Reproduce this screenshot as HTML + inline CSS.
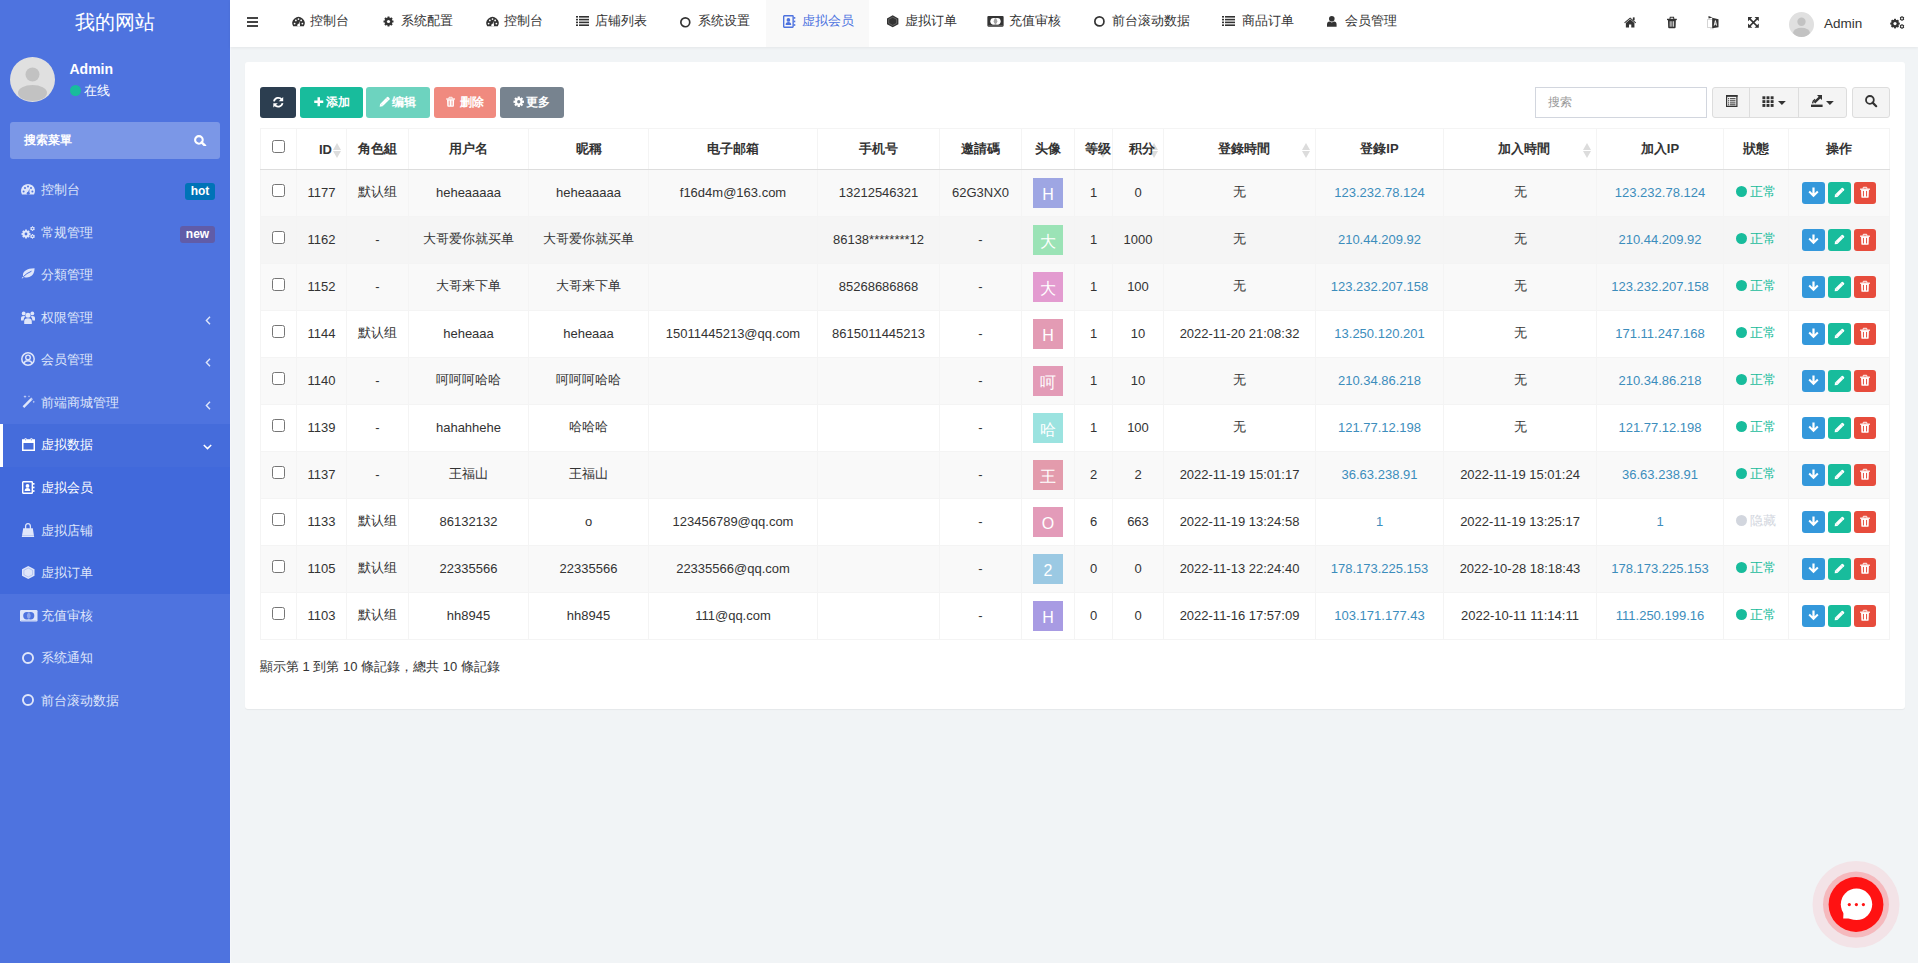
<!DOCTYPE html><html><head><meta charset="utf-8"><style>
*{box-sizing:border-box;margin:0;padding:0}
html,body{width:1918px;height:963px;overflow:hidden}
body{font-family:"Liberation Sans",sans-serif;font-size:13px;color:#333;background:#f1f4f6;position:relative}
.abs{position:absolute}
.sidebar{position:absolute;left:0;top:0;width:230px;height:963px;background:#4e73df}
.logo{position:absolute;left:0;top:0;width:230px;height:47px;text-align:center;color:#fff;font-size:20px;line-height:45px}
.mi{position:absolute;left:0;width:230px;height:42.67px;color:#dfe6fa;font-size:13px;line-height:42.67px}
.mi .t{position:absolute;left:41px;top:0}
.badge{position:absolute;height:17px;line-height:17px;color:#fff;font-weight:bold;font-size:12px;border-radius:3px;text-align:center}
.header{position:absolute;left:230px;top:0;width:1688px;height:47px;background:#fff;box-shadow:0 1px 3px rgba(0,0,0,.06)}
.tab{position:absolute;top:0;height:47px;color:#444;font-size:13px;line-height:43px}
.tab .t{position:absolute;top:0;white-space:nowrap}
.panel{position:absolute;left:245px;top:62px;width:1659.5px;height:647px;background:#fff;border-radius:3px;box-shadow:0 1px 1px rgba(0,0,0,.05)}
.btn{position:absolute;top:87px;height:31px;border-radius:3px;color:#fff;font-size:12px;line-height:30px}
table.tb{position:absolute;left:260px;top:128px;border-collapse:collapse;table-layout:fixed;width:1629px}
.tb td,.tb th{border:1px solid #f4f4f4;text-align:center;vertical-align:middle;white-space:nowrap;overflow:hidden;font-size:13px}
.tb th{height:41px;font-weight:bold;border-bottom:1px solid #ddd;border-top:1px solid #f4f4f4;position:relative}
.tb td{height:47px;padding:0 0 2px 0;position:relative}
.tb tr.odd td{background:#f9f9f9}
.tb tr.hov td{background:#f5f5f5}
.cb{display:inline-block;width:13px;height:13px;border:1px solid #767676;border-radius:2.5px;background:#fff;vertical-align:middle}
.ip{color:#3c8dbc}
.av{display:inline-block;width:30px;height:30px;line-height:34px;color:#fff;font-size:16px;vertical-align:middle;overflow:hidden;position:relative;top:1px}
.st{color:#18bc9c}
.dot{display:inline-block;width:11px;height:11px;border-radius:50%;background:#18bc9c;vertical-align:-1px;margin-right:3px}
.ab{display:inline-block;width:23px;height:22px;border-radius:3px;vertical-align:middle;position:relative;top:1px;margin:0 1.5px}
.sort{position:absolute;top:13px}
</style></head><body>
<div class="sidebar">
<div class="logo">我的网站</div>
<svg class="abs" style="left:10px;top:57px" width="45" height="45" viewBox="0 0 45 45"><defs><clipPath id="cav"><circle cx="22.5" cy="22.5" r="22.5"/></clipPath></defs><circle cx="22.5" cy="22.5" r="22.5" fill="#e0e0e0"/><g clip-path="url(#cav)" fill="#c2c2c2"><circle cx="22.5" cy="17.5" r="7"/><ellipse cx="22.5" cy="36" rx="14.5" ry="8"/></g></svg>
<div class="abs" style="left:69.5px;top:60px;color:#fff;font-weight:bold;font-size:14px;line-height:18px">Admin</div>
<div class="abs" style="left:70px;top:85px;width:11px;height:11px;border-radius:50%;background:#18bc9c"></div>
<div class="abs" style="left:84px;top:82px;color:#fff;font-size:13px;line-height:18px">在线</div>
<div class="abs" style="left:10px;top:122px;width:210px;height:37px;border-radius:3px;background:rgba(255,255,255,.26)"></div>
<div class="abs" style="left:24px;top:131px;color:#fff;font-size:12px;line-height:18px;font-weight:bold">搜索菜單</div>
<svg class="abs" style="left:194px;top:134.5px" width="12.5" height="11.5" viewBox="0 0 12.5 11.5"><circle cx="4.9" cy="4.9" r="3.8" fill="none" stroke="#fff" stroke-width="2.1"/><path d="M7.6 7.4 L11 10.6" stroke="#fff" stroke-width="2.5" stroke-linecap="round"/></svg>
<div class="mi" style="top:168.50px;background:#4e73df;color:#dfe6fa">
<span class="t" style="top:0.50px">控制台</span>
<div class="badge" style="left:185px;top:14.5px;width:30px;background:#0073b7">hot</div>
</div>
<svg style="position:absolute;left:21px;top:184.3px;overflow:visible" width="14" height="11" viewBox="0 0 14 11"><path d="M0.95 10.5 A7 7 0 1 1 13.05 10.5 Z" fill="#dfe6fa"/><circle cx="2.6" cy="7.4" r="1" fill="#4e73df"/><circle cx="4" cy="3.9" r="1" fill="#4e73df"/><circle cx="7" cy="2.4" r="1" fill="#4e73df"/><circle cx="10" cy="3.9" r="1" fill="#4e73df"/><circle cx="11.4" cy="7.4" r="1" fill="#4e73df"/><path d="M6.4 9.6 L8.6 4.4 L8.2 9.9 Z" fill="#4e73df"/><circle cx="7.2" cy="9.3" r="1.5" fill="#4e73df"/></svg>
<div class="mi" style="top:211.07px;background:#4e73df;color:#dfe6fa">
<span class="t" style="top:0.50px">常规管理</span>
<div class="badge" style="left:180px;top:15px;width:35px;background:#605ca8">new</div>
</div>
<svg style="position:absolute;left:21px;top:225.8px;overflow:visible" width="14" height="13" viewBox="0 0 14 13"><circle cx="5" cy="8" r="3.6" fill="#dfe6fa"/><rect x="4.1" y="3.5000000000000004" width="1.8" height="1.7000000000000002" fill="#dfe6fa" transform="rotate(0.0 5 8)"/><rect x="4.1" y="3.5000000000000004" width="1.8" height="1.7000000000000002" fill="#dfe6fa" transform="rotate(45.0 5 8)"/><rect x="4.1" y="3.5000000000000004" width="1.8" height="1.7000000000000002" fill="#dfe6fa" transform="rotate(90.0 5 8)"/><rect x="4.1" y="3.5000000000000004" width="1.8" height="1.7000000000000002" fill="#dfe6fa" transform="rotate(135.0 5 8)"/><rect x="4.1" y="3.5000000000000004" width="1.8" height="1.7000000000000002" fill="#dfe6fa" transform="rotate(180.0 5 8)"/><rect x="4.1" y="3.5000000000000004" width="1.8" height="1.7000000000000002" fill="#dfe6fa" transform="rotate(225.0 5 8)"/><rect x="4.1" y="3.5000000000000004" width="1.8" height="1.7000000000000002" fill="#dfe6fa" transform="rotate(270.0 5 8)"/><rect x="4.1" y="3.5000000000000004" width="1.8" height="1.7000000000000002" fill="#dfe6fa" transform="rotate(315.0 5 8)"/><circle cx="5" cy="8" r="1.4" fill="#4e73df"/><circle cx="11.5" cy="2.6" r="1.9" fill="#dfe6fa"/><rect x="10.95" y="0.30000000000000016" width="1.1" height="1.2000000000000002" fill="#dfe6fa" transform="rotate(0.0 11.5 2.6)"/><rect x="10.95" y="0.30000000000000016" width="1.1" height="1.2000000000000002" fill="#dfe6fa" transform="rotate(60.0 11.5 2.6)"/><rect x="10.95" y="0.30000000000000016" width="1.1" height="1.2000000000000002" fill="#dfe6fa" transform="rotate(120.0 11.5 2.6)"/><rect x="10.95" y="0.30000000000000016" width="1.1" height="1.2000000000000002" fill="#dfe6fa" transform="rotate(180.0 11.5 2.6)"/><rect x="10.95" y="0.30000000000000016" width="1.1" height="1.2000000000000002" fill="#dfe6fa" transform="rotate(240.0 11.5 2.6)"/><rect x="10.95" y="0.30000000000000016" width="1.1" height="1.2000000000000002" fill="#dfe6fa" transform="rotate(300.0 11.5 2.6)"/><circle cx="11.5" cy="2.6" r=".8" fill="#4e73df"/><circle cx="11.5" cy="10.3" r="1.9" fill="#dfe6fa"/><rect x="10.95" y="8.0" width="1.1" height="1.2000000000000002" fill="#dfe6fa" transform="rotate(0.0 11.5 10.3)"/><rect x="10.95" y="8.0" width="1.1" height="1.2000000000000002" fill="#dfe6fa" transform="rotate(60.0 11.5 10.3)"/><rect x="10.95" y="8.0" width="1.1" height="1.2000000000000002" fill="#dfe6fa" transform="rotate(120.0 11.5 10.3)"/><rect x="10.95" y="8.0" width="1.1" height="1.2000000000000002" fill="#dfe6fa" transform="rotate(180.0 11.5 10.3)"/><rect x="10.95" y="8.0" width="1.1" height="1.2000000000000002" fill="#dfe6fa" transform="rotate(240.0 11.5 10.3)"/><rect x="10.95" y="8.0" width="1.1" height="1.2000000000000002" fill="#dfe6fa" transform="rotate(300.0 11.5 10.3)"/><circle cx="11.5" cy="10.3" r=".8" fill="#4e73df"/></svg>
<div class="mi" style="top:253.64px;background:#4e73df;color:#dfe6fa">
<span class="t" style="top:0.50px">分類管理</span>
</div>
<svg style="position:absolute;left:21.2px;top:268.4px;overflow:visible" width="14" height="10.5" viewBox="0 0 14 10.5"><path d="M0.6 10.3 Q1.4 9.2 2.2 8.6 Q1 4.8 4.6 2.4 Q7.6 0.4 13.6 0.3 Q13.4 5.6 10.6 7.8 Q7.2 10.3 2.9 8.9 Q1.9 9.7 1.3 10.5 Z" fill="#dfe6fa"/><path d="M2.2 8.8 Q5.5 5.2 10.5 3.2" stroke="#4e73df" stroke-width="1" fill="none"/></svg>
<div class="mi" style="top:296.21px;background:#4e73df;color:#dfe6fa">
<span class="t" style="top:0.50px">权限管理</span>
</div>
<svg style="position:absolute;left:21px;top:311px;overflow:visible" width="14" height="13" viewBox="0 0 14 13"><circle cx="7" cy="4.3" r="2.5" fill="#dfe6fa"/><circle cx="2.7" cy="2.4" r="1.9" fill="#dfe6fa"/><circle cx="11.3" cy="2.4" r="1.9" fill="#dfe6fa"/><path d="M3.2 13 L3.2 10.4 Q3.2 7.3 7 7.3 Q10.8 7.3 10.8 10.4 L10.8 13 Z" fill="#dfe6fa"/><path d="M0 9.6 L0 7.2 Q0 5 2.7 5 Q3.9 5 4.5 5.6 Q2.6 6.6 2.5 9.6 Z" fill="#dfe6fa"/><path d="M14 9.6 L14 7.2 Q14 5 11.3 5 Q10.1 5 9.5 5.6 Q11.4 6.6 11.5 9.6 Z" fill="#dfe6fa"/></svg>
<svg style="position:absolute;left:205px;top:315.5px;overflow:visible" width="6" height="9" viewBox="0 0 6 9"><path d="M5 0.8 L1.4 4.5 L5 8.2" fill="none" stroke="#dfe6fa" stroke-width="1.4"/></svg>
<div class="mi" style="top:338.79px;background:#4e73df;color:#dfe6fa">
<span class="t" style="top:0.50px">会员管理</span>
</div>
<svg style="position:absolute;left:21px;top:352.3px;overflow:visible" width="14" height="14" viewBox="0 0 14 14"><circle cx="7" cy="7" r="6.2" fill="none" stroke="#dfe6fa" stroke-width="1.5"/><circle cx="7" cy="5.4" r="2.3" fill="none" stroke="#dfe6fa" stroke-width="1.4"/><path d="M2.9 11.6 Q3.6 8.7 7 8.7 Q10.4 8.7 11.1 11.6" fill="none" stroke="#dfe6fa" stroke-width="1.4"/></svg>
<svg style="position:absolute;left:205px;top:358.3px;overflow:visible" width="6" height="9" viewBox="0 0 6 9"><path d="M5 0.8 L1.4 4.5 L5 8.2" fill="none" stroke="#dfe6fa" stroke-width="1.4"/></svg>
<div class="mi" style="top:381.36px;height:42.64px;background:#4e73df;color:#dfe6fa">
<span class="t" style="top:0.50px">前端商城管理</span>
</div>
<svg style="position:absolute;left:21.8px;top:395.3px;overflow:visible" width="13" height="12.5" viewBox="0 0 13 12.5"><path d="M0.6 11.2 L9.2 2.6 L10.9 4.3 L2.3 12.9 Z" fill="#dfe6fa"/><path d="M8.6 3.2 L10.3 4.9" stroke="#4e73df" stroke-width=".5"/><path d="M3 0 L3.4 1.3 L4.7 1.7 L3.4 2.1 L3 3.4 L2.6 2.1 L1.3 1.7 L2.6 1.3 Z" fill="#dfe6fa"/><path d="M7 0.2 L7.3 1 L8.1 1.3 L7.3 1.6 L7 2.4 L6.7 1.6 L5.9 1.3 L6.7 1 Z" fill="#dfe6fa"/><path d="M11.8 5.6 L12.1 6.6 L13 6.9 L12.1 7.2 L11.8 8.2 L11.5 7.2 L10.6 6.9 L11.5 6.6 Z" fill="#dfe6fa"/></svg>
<svg style="position:absolute;left:205px;top:400.5px;overflow:visible" width="6" height="9" viewBox="0 0 6 9"><path d="M5 0.8 L1.4 4.5 L5 8.2" fill="none" stroke="#dfe6fa" stroke-width="1.4"/></svg>
<div class="mi" style="top:424px;height:42.67px;background:#456cdb;color:#fff">
<div class="abs" style="left:0;top:0;width:3px;height:42.67px;background:#fff"></div>
<span class="t" style="top:0.43px">虚拟数据</span>
</div>
<svg style="position:absolute;left:21.8px;top:437.6px;overflow:visible" width="13" height="13" viewBox="0 0 13 13"><rect x="0.75" y="2.2" width="11.5" height="10.05" fill="none" stroke="#fff" stroke-width="1.5"/><rect x="0" y="1.5" width="13" height="3.5" fill="#fff"/><rect x="2.6" y="0" width="2" height="3.2" rx=".9" fill="#fff"/><rect x="8.4" y="0" width="2" height="3.2" rx=".9" fill="#fff"/><rect x="3.1" y=".6" width="1" height="1.8" fill="#456cdb" opacity=".6"/><rect x="8.9" y=".6" width="1" height="1.8" fill="#456cdb" opacity=".6"/></svg>
<svg style="position:absolute;left:203.3px;top:444px;overflow:visible" width="9" height="6" viewBox="0 0 9 6"><path d="M0.8 1 L4.5 4.6 L8.2 1" fill="none" stroke="#fff" stroke-width="1.5"/></svg>
<div class="mi" style="top:466.67px;height:42.40px;background:#4169db;color:#fff">
<span class="t" style="top:0.33px">虚拟会员</span>
</div>
<svg style="position:absolute;left:22px;top:481px;overflow:visible" width="12.5" height="13" viewBox="0 0 12.5 13"><rect x="0.7" y="0.7" width="9.6" height="11.6" rx=".6" fill="none" stroke="#fff" stroke-width="1.4"/><circle cx="5.5" cy="4.9" r="1.9" fill="#fff"/><path d="M2.6 10 Q2.8 7.1 5.5 7.1 Q8.2 7.1 8.4 10 Z" fill="#fff"/><rect x="10.8" y="2" width="1.7" height="1.7" fill="#fff"/><rect x="10.8" y="5.6" width="1.7" height="1.7" fill="#fff"/><rect x="10.8" y="9.2" width="1.7" height="1.7" fill="#fff"/></svg>
<div class="mi" style="top:509.07px;background:#4169db;color:#dfe6fa">
<span class="t" style="top:0.50px">虚拟店铺</span>
</div>
<svg style="position:absolute;left:21.4px;top:523.3px;overflow:visible" width="14" height="14" viewBox="0 0 14 14"><path d="M2.2 5.2 L11.8 5.2 L13.2 14 L0.8 14 Z" fill="#dfe6fa"/><rect x="0.8" y="12.3" width="12.4" height=".6" fill="#4169db" opacity=".35"/><path d="M4.6 6.5 L4.6 3.6 Q4.6 0.7 7 0.7 Q9.4 0.7 9.4 3.6 L9.4 6.5" fill="none" stroke="#dfe6fa" stroke-width="1.3"/></svg>
<div class="mi" style="top:551.64px;background:#4169db;color:#dfe6fa">
<span class="t" style="top:0.50px">虚拟订单</span>
</div>
<svg style="position:absolute;left:22px;top:565.9px;overflow:visible" width="12.5" height="13" viewBox="0 0 12.5 13"><path d="M6.25 0 L12.5 3.3 L12.5 9.7 L6.25 13 L0 9.7 L0 3.3 Z" fill="#dfe6fa"/><path d="M6.25 2 L10.6 4.3 L10.6 8.7 L6.25 11 L1.9 8.7 L1.9 4.3 Z" fill="none" stroke="#4169db" stroke-width=".5" opacity=".5"/></svg>
<div class="mi" style="top:594.21px;background:#4e73df;color:#dfe6fa">
<span class="t" style="top:0.50px">充值审核</span>
</div>
<svg style="position:absolute;left:19.8px;top:609.6px;overflow:visible" width="17.5" height="11.5" viewBox="0 0 17.5 11.5"><rect x="0" y="0" width="17.5" height="11.5" rx="1.2" fill="#dfe6fa"/><circle cx="6.9" cy="5.75" r="3.7" fill="#4e73df"/><circle cx="10.6" cy="5.75" r="3.7" fill="#4e73df"/><path d="M8.75 2.5 A3.7 3.7 0 0 1 8.75 9 A3.7 3.7 0 0 1 8.75 2.5 Z" fill="#dfe6fa" opacity=".45"/><rect x="1" y="10" width="15.5" height=".5" fill="#4e73df" opacity=".4"/></svg>
<div class="mi" style="top:636.79px;background:#4e73df;color:#dfe6fa">
<span class="t" style="top:0.50px">系统通知</span>
</div>
<svg style="position:absolute;left:22px;top:651.9px;overflow:visible" width="12" height="12" viewBox="0 0 12 12"><circle cx="6" cy="6" r="5.05" fill="none" stroke="#dfe6fa" stroke-width="1.9"/></svg>
<div class="mi" style="top:679.36px;background:#4e73df;color:#dfe6fa">
<span class="t" style="top:0.50px">前台滚动数据</span>
</div>
<svg style="position:absolute;left:22px;top:694.3px;overflow:visible" width="12" height="12" viewBox="0 0 12 12"><circle cx="6" cy="6" r="5.05" fill="none" stroke="#dfe6fa" stroke-width="1.9"/></svg>
</div>
<div class="abs" style="left:230px;top:0;width:1px;height:963px;background:#f5f7fb"></div>
<div class="header">
<div class="abs" style="left:17px;top:17px;width:11px;height:2px;background:#444"></div>
<div class="abs" style="left:17px;top:21px;width:11px;height:2px;background:#444"></div>
<div class="abs" style="left:17px;top:25px;width:11px;height:2px;background:#444"></div>
<svg style="position:absolute;left:61.89999999999998px;top:17.2px;overflow:visible" width="13" height="9.7" viewBox="0 0 14 11"><path d="M0.95 10.5 A7 7 0 1 1 13.05 10.5 Z" fill="#333"/><circle cx="2.6" cy="7.4" r="1" fill="#fff"/><circle cx="4" cy="3.9" r="1" fill="#fff"/><circle cx="7" cy="2.4" r="1" fill="#fff"/><circle cx="10" cy="3.9" r="1" fill="#fff"/><circle cx="11.4" cy="7.4" r="1" fill="#fff"/><path d="M6.4 9.6 L8.6 4.4 L8.2 9.9 Z" fill="#fff"/><circle cx="7.2" cy="9.3" r="1.5" fill="#fff"/></svg>
<span class="abs" style="left:80.00px;top:12px;line-height:18px;white-space:nowrap;color:#333">控制台</span>
<svg style="position:absolute;left:153px;top:15.7px;overflow:visible" width="11" height="11" viewBox="0 0 11 11"><circle cx="5.5" cy="5.5" r="3.9" fill="#333"/><rect x="4.55" y="0.5000000000000001" width="1.9" height="1.9" fill="#333" transform="rotate(0.0 5.5 5.5)"/><rect x="4.55" y="0.5000000000000001" width="1.9" height="1.9" fill="#333" transform="rotate(45.0 5.5 5.5)"/><rect x="4.55" y="0.5000000000000001" width="1.9" height="1.9" fill="#333" transform="rotate(90.0 5.5 5.5)"/><rect x="4.55" y="0.5000000000000001" width="1.9" height="1.9" fill="#333" transform="rotate(135.0 5.5 5.5)"/><rect x="4.55" y="0.5000000000000001" width="1.9" height="1.9" fill="#333" transform="rotate(180.0 5.5 5.5)"/><rect x="4.55" y="0.5000000000000001" width="1.9" height="1.9" fill="#333" transform="rotate(225.0 5.5 5.5)"/><rect x="4.55" y="0.5000000000000001" width="1.9" height="1.9" fill="#333" transform="rotate(270.0 5.5 5.5)"/><rect x="4.55" y="0.5000000000000001" width="1.9" height="1.9" fill="#333" transform="rotate(315.0 5.5 5.5)"/><circle cx="5.5" cy="5.5" r="1.6" fill="#fff"/></svg>
<span class="abs" style="left:170.50px;top:12px;line-height:18px;white-space:nowrap;color:#333">系统配置</span>
<svg style="position:absolute;left:255.60000000000002px;top:17px;overflow:visible" width="13" height="9.7" viewBox="0 0 14 11"><path d="M0.95 10.5 A7 7 0 1 1 13.05 10.5 Z" fill="#333"/><circle cx="2.6" cy="7.4" r="1" fill="#fff"/><circle cx="4" cy="3.9" r="1" fill="#fff"/><circle cx="7" cy="2.4" r="1" fill="#fff"/><circle cx="10" cy="3.9" r="1" fill="#fff"/><circle cx="11.4" cy="7.4" r="1" fill="#fff"/><path d="M6.4 9.6 L8.6 4.4 L8.2 9.9 Z" fill="#fff"/><circle cx="7.2" cy="9.3" r="1.5" fill="#fff"/></svg>
<span class="abs" style="left:274.00px;top:12px;line-height:18px;white-space:nowrap;color:#333">控制台</span>
<svg style="position:absolute;left:346px;top:15.75px;overflow:visible" width="13" height="10" viewBox="0 0 13 10"><rect x="0" y="0" width="2" height="1.6" fill="#333"/><rect x="3" y="0" width="10" height="1.6" fill="#333"/><rect x="0" y="2.8" width="2" height="1.6" fill="#333"/><rect x="3" y="2.8" width="10" height="1.6" fill="#333"/><rect x="0" y="5.6" width="2" height="1.6" fill="#333"/><rect x="3" y="5.6" width="10" height="1.6" fill="#333"/><rect x="0" y="8.4" width="2" height="1.6" fill="#333"/><rect x="3" y="8.4" width="10" height="1.6" fill="#333"/></svg>
<span class="abs" style="left:364.50px;top:12px;line-height:18px;white-space:nowrap;color:#333">店铺列表</span>
<svg style="position:absolute;left:450px;top:16.5px;overflow:visible" width="10.6" height="10.6" viewBox="0 0 12 12"><circle cx="6" cy="6" r="5.05" fill="none" stroke="#333" stroke-width="1.9"/></svg>
<span class="abs" style="left:468.00px;top:12px;line-height:18px;white-space:nowrap;color:#333">系统设置</span>
<div class="abs" style="left:536px;top:0;width:103px;height:47px;background:#f9f9f9"></div>
<svg style="position:absolute;left:552.8px;top:14.7px;overflow:visible" width="12.3" height="13" viewBox="0 0 12.5 13"><rect x="0.7" y="0.7" width="9.6" height="11.6" rx=".6" fill="none" stroke="#4e73df" stroke-width="1.4"/><circle cx="5.5" cy="4.9" r="1.9" fill="#4e73df"/><path d="M2.6 10 Q2.8 7.1 5.5 7.1 Q8.2 7.1 8.4 10 Z" fill="#4e73df"/><rect x="10.8" y="2" width="1.7" height="1.7" fill="#4e73df"/><rect x="10.8" y="5.6" width="1.7" height="1.7" fill="#4e73df"/><rect x="10.8" y="9.2" width="1.7" height="1.7" fill="#4e73df"/></svg>
<span class="abs" style="left:571.50px;top:12px;line-height:18px;white-space:nowrap;color:#4e73df">虚拟会员</span>
<svg style="position:absolute;left:656.5px;top:15.2px;overflow:visible" width="11.4" height="12.6" viewBox="0 0 12.5 13"><path d="M6.25 0 L12.5 3.3 L12.5 9.7 L6.25 13 L0 9.7 L0 3.3 Z" fill="#333"/><path d="M6.25 2 L10.6 4.3 L10.6 8.7 L6.25 11 L1.9 8.7 L1.9 4.3 Z" fill="none" stroke="#fff" stroke-width=".5" opacity=".5"/></svg>
<span class="abs" style="left:675.00px;top:12px;line-height:18px;white-space:nowrap;color:#333">虚拟订单</span>
<svg style="position:absolute;left:757.1px;top:16.1px;overflow:visible" width="17" height="10.7" viewBox="0 0 17.5 11.5"><rect x="0" y="0" width="17.5" height="11.5" rx="1.2" fill="#333"/><circle cx="6.9" cy="5.75" r="3.7" fill="#fff"/><circle cx="10.6" cy="5.75" r="3.7" fill="#fff"/><path d="M8.75 2.5 A3.7 3.7 0 0 1 8.75 9 A3.7 3.7 0 0 1 8.75 2.5 Z" fill="#333" opacity=".45"/><rect x="1" y="10" width="15.5" height=".5" fill="#fff" opacity=".4"/></svg>
<span class="abs" style="left:778.50px;top:12px;line-height:18px;white-space:nowrap;color:#333">充值审核</span>
<svg style="position:absolute;left:863.7px;top:16.4px;overflow:visible" width="10.8" height="10.8" viewBox="0 0 12 12"><circle cx="6" cy="6" r="5.05" fill="none" stroke="#333" stroke-width="1.9"/></svg>
<span class="abs" style="left:882.00px;top:12px;line-height:18px;white-space:nowrap;color:#333">前台滚动数据</span>
<svg style="position:absolute;left:992.3px;top:15.9px;overflow:visible" width="13" height="10" viewBox="0 0 13 10"><rect x="0" y="0" width="2" height="1.6" fill="#333"/><rect x="3" y="0" width="10" height="1.6" fill="#333"/><rect x="0" y="2.8" width="2" height="1.6" fill="#333"/><rect x="3" y="2.8" width="10" height="1.6" fill="#333"/><rect x="0" y="5.6" width="2" height="1.6" fill="#333"/><rect x="3" y="5.6" width="10" height="1.6" fill="#333"/><rect x="0" y="8.4" width="2" height="1.6" fill="#333"/><rect x="3" y="8.4" width="10" height="1.6" fill="#333"/></svg>
<span class="abs" style="left:1011.50px;top:12px;line-height:18px;white-space:nowrap;color:#333">商品订单</span>
<svg style="position:absolute;left:1097px;top:16.2px;overflow:visible" width="9.6" height="10.8" viewBox="0 0 9.6 10.8"><circle cx="4.8" cy="2.8" r="2.8" fill="#333"/><path d="M0 10.8 L0 8.6 Q0 5.8 2.6 5.6 Q3.6 6.4 4.8 6.4 Q6 6.4 7 5.6 Q9.6 5.8 9.6 8.6 L9.6 10.8 Z" fill="#333"/></svg>
<span class="abs" style="left:1115.00px;top:12px;line-height:18px;white-space:nowrap;color:#333">会员管理</span>
<svg style="position:absolute;left:1394px;top:16.6px;overflow:visible" width="12.3" height="10.5" viewBox="0 0 12.5 10.5"><path d="M0.2 5.6 L6.25 0.3 L12.3 5.6 L11.6 6.3 L6.25 1.6 L0.9 6.3 Z" fill="#333"/><rect x="9" y="0.3" width="1.8" height="3" fill="#333"/><path d="M1.9 6 L6.25 2.2 L10.6 6 L10.6 10.5 L7.4 10.5 L7.4 7.5 L5.1 7.5 L5.1 10.5 L1.9 10.5 Z" fill="#333"/></svg>
<svg style="position:absolute;left:1437px;top:16.7px;overflow:visible" width="9.8" height="11.3" viewBox="0 0 10 11.5"><rect x="0" y="1.8" width="10" height="1.4" fill="#333"/><path d="M3 2 L3.3 0.3 L6.7 0.3 L7 2" fill="none" stroke="#333" stroke-width="1.1"/><path d="M1 3 L9 3 L8.8 10.5 Q8.7 11.5 7.8 11.5 L2.2 11.5 Q1.3 11.5 1.2 10.5 Z" fill="#333"/><rect x="2.8" y="4.3" width="0.9" height="5.6" fill="#fff" opacity=".9"/><rect x="4.55" y="4.3" width="0.9" height="5.6" fill="#fff" opacity=".9"/><rect x="6.3" y="4.3" width="0.9" height="5.6" fill="#fff" opacity=".9"/></svg>
<svg style="position:absolute;left:1476.5px;top:15.8px;overflow:visible" width="12" height="13" viewBox="0 0 12 13"><path d="M0.5 3.5 L5.5 3.5 L5.5 11.5 L0.5 11.5 Z" fill="none" stroke="#333" stroke-width=".6" opacity=".35"/><path d="M1.5 0 L5.5 1.6 L1.5 2.4 Z" fill="#333"/><path d="M5.2 1.8 L11.5 3.2 L11.5 11.2 L5.2 12.2 Z" fill="#333"/><path d="M7.2 9.6 L8.4 4.6 L9.6 9.6 M7.7 8 L9.1 8" stroke="#fff" stroke-width=".9" fill="none"/><path d="M3 12.8 L7 12.8" stroke="#333" stroke-width=".5" opacity=".35"/></svg>
<svg style="position:absolute;left:1518px;top:17px;overflow:visible" width="10.8" height="10.8" viewBox="0 0 11 11"><path d="M0 0 L4.4 0 L0 4.4 Z M11 0 L6.6 0 L11 4.4 Z M0 11 L4.4 11 L0 6.6 Z M11 11 L6.6 11 L11 6.6 Z" fill="#333"/><path d="M1.6 1.6 L9.4 9.4 M9.4 1.6 L1.6 9.4" stroke="#333" stroke-width="1.7"/></svg>
<svg class="abs" style="left:1559px;top:12px" width="25" height="25" viewBox="0 0 45 45"><defs><clipPath id="cav2"><circle cx="22.5" cy="22.5" r="22.5"/></clipPath></defs><circle cx="22.5" cy="22.5" r="22.5" fill="#e0e0e0"/><g clip-path="url(#cav2)" fill="#c2c2c2"><circle cx="22.5" cy="17.5" r="7.5"/><ellipse cx="22.5" cy="37" rx="15" ry="8.5"/></g></svg>
<div class="abs" style="left:1594px;top:14.5px;font-size:13.5px;line-height:18px;color:#333">Admin</div>
<svg style="position:absolute;left:1660.3px;top:15.8px;overflow:visible" width="14.5" height="13" viewBox="0 0 14.5 13"><circle cx="5" cy="7.6" r="3.9" fill="#333"/><rect x="4.05" y="2.7999999999999994" width="1.9" height="1.7000000000000002" fill="#333" transform="rotate(0.0 5 7.6)"/><rect x="4.05" y="2.7999999999999994" width="1.9" height="1.7000000000000002" fill="#333" transform="rotate(45.0 5 7.6)"/><rect x="4.05" y="2.7999999999999994" width="1.9" height="1.7000000000000002" fill="#333" transform="rotate(90.0 5 7.6)"/><rect x="4.05" y="2.7999999999999994" width="1.9" height="1.7000000000000002" fill="#333" transform="rotate(135.0 5 7.6)"/><rect x="4.05" y="2.7999999999999994" width="1.9" height="1.7000000000000002" fill="#333" transform="rotate(180.0 5 7.6)"/><rect x="4.05" y="2.7999999999999994" width="1.9" height="1.7000000000000002" fill="#333" transform="rotate(225.0 5 7.6)"/><rect x="4.05" y="2.7999999999999994" width="1.9" height="1.7000000000000002" fill="#333" transform="rotate(270.0 5 7.6)"/><rect x="4.05" y="2.7999999999999994" width="1.9" height="1.7000000000000002" fill="#333" transform="rotate(315.0 5 7.6)"/><circle cx="5" cy="7.6" r="1.6" fill="#fff"/><circle cx="12" cy="2.5" r="1.9" fill="#333"/><rect x="11.45" y="0.20000000000000007" width="1.1" height="1.2000000000000002" fill="#333" transform="rotate(0.0 12 2.5)"/><rect x="11.45" y="0.20000000000000007" width="1.1" height="1.2000000000000002" fill="#333" transform="rotate(60.0 12 2.5)"/><rect x="11.45" y="0.20000000000000007" width="1.1" height="1.2000000000000002" fill="#333" transform="rotate(120.0 12 2.5)"/><rect x="11.45" y="0.20000000000000007" width="1.1" height="1.2000000000000002" fill="#333" transform="rotate(180.0 12 2.5)"/><rect x="11.45" y="0.20000000000000007" width="1.1" height="1.2000000000000002" fill="#333" transform="rotate(240.0 12 2.5)"/><rect x="11.45" y="0.20000000000000007" width="1.1" height="1.2000000000000002" fill="#333" transform="rotate(300.0 12 2.5)"/><circle cx="12" cy="2.5" r=".9" fill="#fff"/><circle cx="12" cy="10.5" r="1.9" fill="#333"/><rect x="11.45" y="8.2" width="1.1" height="1.2000000000000002" fill="#333" transform="rotate(0.0 12 10.5)"/><rect x="11.45" y="8.2" width="1.1" height="1.2000000000000002" fill="#333" transform="rotate(60.0 12 10.5)"/><rect x="11.45" y="8.2" width="1.1" height="1.2000000000000002" fill="#333" transform="rotate(120.0 12 10.5)"/><rect x="11.45" y="8.2" width="1.1" height="1.2000000000000002" fill="#333" transform="rotate(180.0 12 10.5)"/><rect x="11.45" y="8.2" width="1.1" height="1.2000000000000002" fill="#333" transform="rotate(240.0 12 10.5)"/><rect x="11.45" y="8.2" width="1.1" height="1.2000000000000002" fill="#333" transform="rotate(300.0 12 10.5)"/><circle cx="12" cy="10.5" r=".9" fill="#fff"/></svg>
</div>
<div class="panel"></div>
<div class="btn" style="left:260px;width:36px;background:#2c3e50">
<svg style="position:absolute;left:12px;top:9px" width="12.5" height="12.5" viewBox="0 0 14 14" preserveAspectRatio="none"><path d="M2.2 6 A5 5 0 0 1 11 4" fill="none" stroke="#fff" stroke-width="2"/><path d="M12.5 1 L12.5 6 L7.5 6 Z" fill="#fff"/><path d="M11.8 8 A5 5 0 0 1 3 10" fill="none" stroke="#fff" stroke-width="2"/><path d="M1.5 13 L1.5 8 L6.5 8 Z" fill="#fff"/></svg>
</div>
<div class="btn" style="left:300px;width:62.7px;background:#18bc9c">
<svg style="position:absolute;left:12.5px;top:9px" width="11.5" height="11.5" viewBox="0 0 14 14" preserveAspectRatio="none"><path d="M5.5 1.5 L8.5 1.5 L8.5 5.5 L12.5 5.5 L12.5 8.5 L8.5 8.5 L8.5 12.5 L5.5 12.5 L5.5 8.5 L1.5 8.5 L1.5 5.5 L5.5 5.5 Z" fill="#fff"/></svg>
<span class="abs" style="left:26px;top:5.5px;line-height:18px;font-size:12px;font-weight:bold">添加</span>
</div>
<div class="btn" style="left:366px;width:64px;background:#6dd3bf">
<svg style="position:absolute;left:12.5px;top:9px" width="11.5" height="11.5" viewBox="0 0 14 14" preserveAspectRatio="none"><path d="M0.8 13.2 L1.4 9.6 L9.8 1.2 Q10.6 0.6 11.4 1.2 L12.8 2.6 Q13.4 3.4 12.8 4.2 L4.4 12.6 Z" fill="#fff"/><path d="M2.2 9.2 L4.8 11.8 M8.6 2.6 L11.4 5.4" stroke="#6dd3bf" stroke-width=".6" opacity=".5"/></svg>
<span class="abs" style="left:26px;top:5.5px;line-height:18px;font-size:12px;font-weight:bold">编辑</span>
</div>
<div class="btn" style="left:434px;width:61.8px;background:#f08a7f">
<svg style="position:absolute;left:12.2px;top:9.6px;overflow:visible" width="9.2" height="9.8" viewBox="0 0 10 11"><rect x="0" y="1.6" width="10" height="1.3" fill="#fff"/><path d="M3 1.8 L3.3 0.3 L6.7 0.3 L7 1.8" fill="none" stroke="#fff" stroke-width="1"/><path d="M1 2.8 L9 2.8 L8.7 10.1 Q8.6 11 7.8 11 L2.2 11 Q1.4 11 1.3 10.1 Z" fill="#fff"/><rect x="2.9" y="4" width="1" height="5.6" fill="#f08a7f"/><rect x="6.1" y="4" width="1" height="5.6" fill="#f08a7f"/></svg>
<span class="abs" style="left:26px;top:5.5px;line-height:18px;font-size:12px;font-weight:bold">删除</span>
</div>
<div class="btn" style="left:500px;width:63.7px;background:#77838f">
<svg style="position:absolute;left:12.5px;top:9px" width="11.5" height="11.5" viewBox="0 0 14 14" preserveAspectRatio="none"><g fill="#fff"><circle cx="7" cy="7" r="4.6"/><rect x="5.6" y="0.6" width="2.8" height="3" transform="rotate(0 7 7)"/><rect x="5.6" y="0.6" width="2.8" height="3" transform="rotate(45 7 7)"/><rect x="5.6" y="0.6" width="2.8" height="3" transform="rotate(90 7 7)"/><rect x="5.6" y="0.6" width="2.8" height="3" transform="rotate(135 7 7)"/><rect x="5.6" y="0.6" width="2.8" height="3" transform="rotate(180 7 7)"/><rect x="5.6" y="0.6" width="2.8" height="3" transform="rotate(225 7 7)"/><rect x="5.6" y="0.6" width="2.8" height="3" transform="rotate(270 7 7)"/><rect x="5.6" y="0.6" width="2.8" height="3" transform="rotate(315 7 7)"/></g><circle cx="7" cy="7" r="2" fill="#77838f"/></svg>
<span class="abs" style="left:26px;top:5.5px;line-height:18px;font-size:12px;font-weight:bold">更多</span>
</div>
<div class="abs" style="left:1535px;top:87px;width:172px;height:31px;border:1px solid #d2d6de;background:#fff"></div>
<div class="abs" style="left:1548px;top:93px;color:#999;font-size:12px;line-height:18px">搜索</div>
<div class="abs" style="left:1712px;top:87px;width:134.5px;height:31px;border:1px solid #ddd;border-radius:3px;background:#f4f4f4"></div>
<div class="abs" style="left:1749px;top:87px;width:1px;height:31px;background:#ddd"></div>
<div class="abs" style="left:1798px;top:87px;width:1px;height:31px;background:#ddd"></div>
<svg style="position:absolute;left:1726px;top:94.8px;overflow:visible" width="11.5" height="12" viewBox="0 0 11.5 12"><rect x="0.6" y="0.6" width="10.3" height="10.8" fill="none" stroke="#333" stroke-width="1.2"/><rect x="0" y="0" width="11.5" height="1.8" fill="#333"/><rect x="2" y="3.2" width="1.2" height="1" fill="#333"/><rect x="4" y="3.2" width="5.5" height="1" fill="#333"/><rect x="2" y="5.3" width="1.2" height="1" fill="#333"/><rect x="4" y="5.3" width="5.5" height="1" fill="#333"/><rect x="2" y="7.4" width="1.2" height="1" fill="#333"/><rect x="4" y="7.4" width="5.5" height="1" fill="#333"/><rect x="2" y="9.3" width="1.2" height="1" fill="#333"/><rect x="4" y="9.3" width="5.5" height="1" fill="#333"/></svg>
<svg style="position:absolute;left:1762px;top:95px" width="12" height="12" viewBox="0 0 14 14" preserveAspectRatio="none"><rect x="0.5" y="1.5" width="3.4" height="3.4" fill="#333"/><rect x="0.5" y="6" width="3.4" height="3.4" fill="#333"/><rect x="0.5" y="10.5" width="3.4" height="3.4" fill="#333"/><rect x="5.3" y="1.5" width="3.4" height="3.4" fill="#333"/><rect x="5.3" y="6" width="3.4" height="3.4" fill="#333"/><rect x="5.3" y="10.5" width="3.4" height="3.4" fill="#333"/><rect x="10.1" y="1.5" width="3.4" height="3.4" fill="#333"/><rect x="10.1" y="6" width="3.4" height="3.4" fill="#333"/><rect x="10.1" y="10.5" width="3.4" height="3.4" fill="#333"/></svg>
<svg style="position:absolute;left:1778.2px;top:100.8px;overflow:visible" width="7.8" height="4" viewBox="0 0 7.8 4"><path d="M0 0 L7.8 0 L3.9 4 Z" fill="#333"/></svg>
<svg style="position:absolute;left:1810.5px;top:94.8px;overflow:visible" width="11.6" height="12" viewBox="0 0 11.6 12"><rect x="0" y="9.6" width="11.6" height="2.4" fill="#333"/><path d="M6 0 L11 0 L11 5 L9.3 3.4 L4.2 8.4 L2.6 6.8 L7.6 1.7 Z" fill="#333"/><path d="M1.6 8.4 Q1.8 5.6 4.2 4.4" stroke="#333" stroke-width="1.4" fill="none"/></svg>
<svg style="position:absolute;left:1826.2px;top:100.8px;overflow:visible" width="7.8" height="4" viewBox="0 0 7.8 4"><path d="M0 0 L7.8 0 L3.9 4 Z" fill="#333"/></svg>
<div class="abs" style="left:1852px;top:87px;width:37.5px;height:31px;border:1px solid #ddd;border-radius:3px;background:#f4f4f4"></div>
<svg style="position:absolute;left:1865px;top:95.1px;overflow:visible" width="12" height="11.8" viewBox="0 0 12 11.8"><circle cx="4.9" cy="4.9" r="3.9" fill="none" stroke="#333" stroke-width="1.8"/><path d="M7.6 7.6 L11.2 11.2" stroke="#333" stroke-width="2.2" stroke-linecap="round"/></svg>
<table class="tb"><colgroup><col style="width:36px"><col style="width:50px"><col style="width:62px"><col style="width:120px"><col style="width:120px"><col style="width:169px"><col style="width:122px"><col style="width:82px"><col style="width:53px"><col style="width:38px"><col style="width:51px"><col style="width:152px"><col style="width:128px"><col style="width:153px"><col style="width:127px"><col style="width:65px"><col style="width:101px"></colgroup><thead><tr>
<th><span class="cb" style="position:relative;top:-4px"></span></th>
<th><svg style="position:absolute;right:5.5px;top:13.5px" width="8" height="15" viewBox="0 0 8 15"><path d="M4 0 L8 7 L0 7 Z M0 8 L8 8 L4 15 Z" fill="#dcdcdc"/></svg><span style="position:relative;left:4px">ID</span></th>
<th>角色組</th>
<th>用户名</th>
<th>昵稱</th>
<th>电子邮箱</th>
<th>手机号</th>
<th>邀請碼</th>
<th>头像</th>
<th><svg style="position:absolute;right:5.5px;top:13.5px" width="8" height="15" viewBox="0 0 8 15"><path d="M4 0 L8 7 L0 7 Z M0 8 L8 8 L4 15 Z" fill="#dcdcdc"/></svg><span style="position:relative;left:4px">等级</span></th>
<th><svg style="position:absolute;right:5.5px;top:13.5px" width="8" height="15" viewBox="0 0 8 15"><path d="M4 0 L8 7 L0 7 Z M0 8 L8 8 L4 15 Z" fill="#dcdcdc"/></svg><span style="position:relative;left:4px">积分</span></th>
<th><svg style="position:absolute;right:5.5px;top:13.5px" width="8" height="15" viewBox="0 0 8 15"><path d="M4 0 L8 7 L0 7 Z M0 8 L8 8 L4 15 Z" fill="#dcdcdc"/></svg><span style="position:relative;left:4px">登錄時間</span></th>
<th>登錄IP</th>
<th><svg style="position:absolute;right:5.5px;top:13.5px" width="8" height="15" viewBox="0 0 8 15"><path d="M4 0 L8 7 L0 7 Z M0 8 L8 8 L4 15 Z" fill="#dcdcdc"/></svg><span style="position:relative;left:4px">加入時間</span></th>
<th>加入IP</th>
<th>狀態</th>
<th>操作</th>
</tr></thead><tbody>
<tr class="odd">
<td><span class="cb" style="position:relative;top:-3px"></span></td>
<td>1177</td>
<td>默认组</td>
<td>heheaaaaa</td>
<td>heheaaaaa</td>
<td>f16d4m@163.com</td>
<td>13212546321</td>
<td>62G3NX0</td>
<td><span class="av" style="background:#9ea6e3">H</span></td>
<td>1</td><td>0</td><td>无</td><td><span class="ip">123.232.78.124</span></td><td>无</td><td><span class="ip">123.232.78.124</span></td>
<td><span class="st"><span class="dot"></span>正常</span></td>
<td><span class="ab" style="background:#3498db"><svg style="position:absolute;left:6px;top:5px" width="11" height="11" viewBox="0 0 14 14" preserveAspectRatio="none"><path d="M5.6 0.5 L8.4 0.5 L8.4 8 L11.6 4.8 L13.4 6.8 L7 13.2 L0.6 6.8 L2.4 4.8 L5.6 8 Z" fill="#fff"/></svg></span><span class="ab" style="background:#18bc9c"><svg style="position:absolute;left:6px;top:5px" width="11" height="11" viewBox="0 0 14 14" preserveAspectRatio="none"><path d="M0.8 13.2 L1.4 9.6 L9.8 1.2 Q10.6 0.6 11.4 1.2 L12.8 2.6 Q13.4 3.4 12.8 4.2 L4.4 12.6 Z" fill="#fff"/><path d="M2.2 9.2 L4.8 11.8 M8.6 2.6 L11.4 5.4" stroke="#18bc9c" stroke-width=".6" opacity=".5"/></svg></span><span class="ab" style="background:#e74c3c;width:21.5px"><svg style="position:absolute;left:5.8px;top:5.2px;overflow:visible" width="10" height="10.8" viewBox="0 0 10 11"><rect x="0" y="1.6" width="10" height="1.3" fill="#fff"/><path d="M3 1.8 L3.3 0.3 L6.7 0.3 L7 1.8" fill="none" stroke="#fff" stroke-width="1"/><path d="M1 2.8 L9 2.8 L8.7 10.1 Q8.6 11 7.8 11 L2.2 11 Q1.4 11 1.3 10.1 Z" fill="#fff"/><rect x="2.9" y="4" width="1" height="5.6" fill="#e74c3c"/><rect x="6.1" y="4" width="1" height="5.6" fill="#e74c3c"/></svg></span></td>
</tr>
<tr class="hov">
<td><span class="cb" style="position:relative;top:-3px"></span></td>
<td>1162</td>
<td>-</td>
<td>大哥爱你就买单</td>
<td>大哥爱你就买单</td>
<td></td>
<td>86138********12</td>
<td>-</td>
<td><span class="av" style="background:#9be3b6">大</span></td>
<td>1</td><td>1000</td><td>无</td><td><span class="ip">210.44.209.92</span></td><td>无</td><td><span class="ip">210.44.209.92</span></td>
<td><span class="st"><span class="dot"></span>正常</span></td>
<td><span class="ab" style="background:#3498db"><svg style="position:absolute;left:6px;top:5px" width="11" height="11" viewBox="0 0 14 14" preserveAspectRatio="none"><path d="M5.6 0.5 L8.4 0.5 L8.4 8 L11.6 4.8 L13.4 6.8 L7 13.2 L0.6 6.8 L2.4 4.8 L5.6 8 Z" fill="#fff"/></svg></span><span class="ab" style="background:#18bc9c"><svg style="position:absolute;left:6px;top:5px" width="11" height="11" viewBox="0 0 14 14" preserveAspectRatio="none"><path d="M0.8 13.2 L1.4 9.6 L9.8 1.2 Q10.6 0.6 11.4 1.2 L12.8 2.6 Q13.4 3.4 12.8 4.2 L4.4 12.6 Z" fill="#fff"/><path d="M2.2 9.2 L4.8 11.8 M8.6 2.6 L11.4 5.4" stroke="#18bc9c" stroke-width=".6" opacity=".5"/></svg></span><span class="ab" style="background:#e74c3c;width:21.5px"><svg style="position:absolute;left:5.8px;top:5.2px;overflow:visible" width="10" height="10.8" viewBox="0 0 10 11"><rect x="0" y="1.6" width="10" height="1.3" fill="#fff"/><path d="M3 1.8 L3.3 0.3 L6.7 0.3 L7 1.8" fill="none" stroke="#fff" stroke-width="1"/><path d="M1 2.8 L9 2.8 L8.7 10.1 Q8.6 11 7.8 11 L2.2 11 Q1.4 11 1.3 10.1 Z" fill="#fff"/><rect x="2.9" y="4" width="1" height="5.6" fill="#e74c3c"/><rect x="6.1" y="4" width="1" height="5.6" fill="#e74c3c"/></svg></span></td>
</tr>
<tr class="odd">
<td><span class="cb" style="position:relative;top:-3px"></span></td>
<td>1152</td>
<td>-</td>
<td>大哥来下单</td>
<td>大哥来下单</td>
<td></td>
<td>85268686868</td>
<td>-</td>
<td><span class="av" style="background:#e39bd0">大</span></td>
<td>1</td><td>100</td><td>无</td><td><span class="ip">123.232.207.158</span></td><td>无</td><td><span class="ip">123.232.207.158</span></td>
<td><span class="st"><span class="dot"></span>正常</span></td>
<td><span class="ab" style="background:#3498db"><svg style="position:absolute;left:6px;top:5px" width="11" height="11" viewBox="0 0 14 14" preserveAspectRatio="none"><path d="M5.6 0.5 L8.4 0.5 L8.4 8 L11.6 4.8 L13.4 6.8 L7 13.2 L0.6 6.8 L2.4 4.8 L5.6 8 Z" fill="#fff"/></svg></span><span class="ab" style="background:#18bc9c"><svg style="position:absolute;left:6px;top:5px" width="11" height="11" viewBox="0 0 14 14" preserveAspectRatio="none"><path d="M0.8 13.2 L1.4 9.6 L9.8 1.2 Q10.6 0.6 11.4 1.2 L12.8 2.6 Q13.4 3.4 12.8 4.2 L4.4 12.6 Z" fill="#fff"/><path d="M2.2 9.2 L4.8 11.8 M8.6 2.6 L11.4 5.4" stroke="#18bc9c" stroke-width=".6" opacity=".5"/></svg></span><span class="ab" style="background:#e74c3c;width:21.5px"><svg style="position:absolute;left:5.8px;top:5.2px;overflow:visible" width="10" height="10.8" viewBox="0 0 10 11"><rect x="0" y="1.6" width="10" height="1.3" fill="#fff"/><path d="M3 1.8 L3.3 0.3 L6.7 0.3 L7 1.8" fill="none" stroke="#fff" stroke-width="1"/><path d="M1 2.8 L9 2.8 L8.7 10.1 Q8.6 11 7.8 11 L2.2 11 Q1.4 11 1.3 10.1 Z" fill="#fff"/><rect x="2.9" y="4" width="1" height="5.6" fill="#e74c3c"/><rect x="6.1" y="4" width="1" height="5.6" fill="#e74c3c"/></svg></span></td>
</tr>
<tr class="">
<td><span class="cb" style="position:relative;top:-3px"></span></td>
<td>1144</td>
<td>默认组</td>
<td>heheaaa</td>
<td>heheaaa</td>
<td>15011445213@qq.com</td>
<td>8615011445213</td>
<td>-</td>
<td><span class="av" style="background:#e39bb4">H</span></td>
<td>1</td><td>10</td><td>2022-11-20 21:08:32</td><td><span class="ip">13.250.120.201</span></td><td>无</td><td><span class="ip">171.11.247.168</span></td>
<td><span class="st"><span class="dot"></span>正常</span></td>
<td><span class="ab" style="background:#3498db"><svg style="position:absolute;left:6px;top:5px" width="11" height="11" viewBox="0 0 14 14" preserveAspectRatio="none"><path d="M5.6 0.5 L8.4 0.5 L8.4 8 L11.6 4.8 L13.4 6.8 L7 13.2 L0.6 6.8 L2.4 4.8 L5.6 8 Z" fill="#fff"/></svg></span><span class="ab" style="background:#18bc9c"><svg style="position:absolute;left:6px;top:5px" width="11" height="11" viewBox="0 0 14 14" preserveAspectRatio="none"><path d="M0.8 13.2 L1.4 9.6 L9.8 1.2 Q10.6 0.6 11.4 1.2 L12.8 2.6 Q13.4 3.4 12.8 4.2 L4.4 12.6 Z" fill="#fff"/><path d="M2.2 9.2 L4.8 11.8 M8.6 2.6 L11.4 5.4" stroke="#18bc9c" stroke-width=".6" opacity=".5"/></svg></span><span class="ab" style="background:#e74c3c;width:21.5px"><svg style="position:absolute;left:5.8px;top:5.2px;overflow:visible" width="10" height="10.8" viewBox="0 0 10 11"><rect x="0" y="1.6" width="10" height="1.3" fill="#fff"/><path d="M3 1.8 L3.3 0.3 L6.7 0.3 L7 1.8" fill="none" stroke="#fff" stroke-width="1"/><path d="M1 2.8 L9 2.8 L8.7 10.1 Q8.6 11 7.8 11 L2.2 11 Q1.4 11 1.3 10.1 Z" fill="#fff"/><rect x="2.9" y="4" width="1" height="5.6" fill="#e74c3c"/><rect x="6.1" y="4" width="1" height="5.6" fill="#e74c3c"/></svg></span></td>
</tr>
<tr class="odd">
<td><span class="cb" style="position:relative;top:-3px"></span></td>
<td>1140</td>
<td>-</td>
<td>呵呵呵哈哈</td>
<td>呵呵呵哈哈</td>
<td></td>
<td></td>
<td>-</td>
<td><span class="av" style="background:#e39bb7">呵</span></td>
<td>1</td><td>10</td><td>无</td><td><span class="ip">210.34.86.218</span></td><td>无</td><td><span class="ip">210.34.86.218</span></td>
<td><span class="st"><span class="dot"></span>正常</span></td>
<td><span class="ab" style="background:#3498db"><svg style="position:absolute;left:6px;top:5px" width="11" height="11" viewBox="0 0 14 14" preserveAspectRatio="none"><path d="M5.6 0.5 L8.4 0.5 L8.4 8 L11.6 4.8 L13.4 6.8 L7 13.2 L0.6 6.8 L2.4 4.8 L5.6 8 Z" fill="#fff"/></svg></span><span class="ab" style="background:#18bc9c"><svg style="position:absolute;left:6px;top:5px" width="11" height="11" viewBox="0 0 14 14" preserveAspectRatio="none"><path d="M0.8 13.2 L1.4 9.6 L9.8 1.2 Q10.6 0.6 11.4 1.2 L12.8 2.6 Q13.4 3.4 12.8 4.2 L4.4 12.6 Z" fill="#fff"/><path d="M2.2 9.2 L4.8 11.8 M8.6 2.6 L11.4 5.4" stroke="#18bc9c" stroke-width=".6" opacity=".5"/></svg></span><span class="ab" style="background:#e74c3c;width:21.5px"><svg style="position:absolute;left:5.8px;top:5.2px;overflow:visible" width="10" height="10.8" viewBox="0 0 10 11"><rect x="0" y="1.6" width="10" height="1.3" fill="#fff"/><path d="M3 1.8 L3.3 0.3 L6.7 0.3 L7 1.8" fill="none" stroke="#fff" stroke-width="1"/><path d="M1 2.8 L9 2.8 L8.7 10.1 Q8.6 11 7.8 11 L2.2 11 Q1.4 11 1.3 10.1 Z" fill="#fff"/><rect x="2.9" y="4" width="1" height="5.6" fill="#e74c3c"/><rect x="6.1" y="4" width="1" height="5.6" fill="#e74c3c"/></svg></span></td>
</tr>
<tr class="">
<td><span class="cb" style="position:relative;top:-3px"></span></td>
<td>1139</td>
<td>-</td>
<td>hahahhehe</td>
<td>哈哈哈</td>
<td></td>
<td></td>
<td>-</td>
<td><span class="av" style="background:#9be3e0">哈</span></td>
<td>1</td><td>100</td><td>无</td><td><span class="ip">121.77.12.198</span></td><td>无</td><td><span class="ip">121.77.12.198</span></td>
<td><span class="st"><span class="dot"></span>正常</span></td>
<td><span class="ab" style="background:#3498db"><svg style="position:absolute;left:6px;top:5px" width="11" height="11" viewBox="0 0 14 14" preserveAspectRatio="none"><path d="M5.6 0.5 L8.4 0.5 L8.4 8 L11.6 4.8 L13.4 6.8 L7 13.2 L0.6 6.8 L2.4 4.8 L5.6 8 Z" fill="#fff"/></svg></span><span class="ab" style="background:#18bc9c"><svg style="position:absolute;left:6px;top:5px" width="11" height="11" viewBox="0 0 14 14" preserveAspectRatio="none"><path d="M0.8 13.2 L1.4 9.6 L9.8 1.2 Q10.6 0.6 11.4 1.2 L12.8 2.6 Q13.4 3.4 12.8 4.2 L4.4 12.6 Z" fill="#fff"/><path d="M2.2 9.2 L4.8 11.8 M8.6 2.6 L11.4 5.4" stroke="#18bc9c" stroke-width=".6" opacity=".5"/></svg></span><span class="ab" style="background:#e74c3c;width:21.5px"><svg style="position:absolute;left:5.8px;top:5.2px;overflow:visible" width="10" height="10.8" viewBox="0 0 10 11"><rect x="0" y="1.6" width="10" height="1.3" fill="#fff"/><path d="M3 1.8 L3.3 0.3 L6.7 0.3 L7 1.8" fill="none" stroke="#fff" stroke-width="1"/><path d="M1 2.8 L9 2.8 L8.7 10.1 Q8.6 11 7.8 11 L2.2 11 Q1.4 11 1.3 10.1 Z" fill="#fff"/><rect x="2.9" y="4" width="1" height="5.6" fill="#e74c3c"/><rect x="6.1" y="4" width="1" height="5.6" fill="#e74c3c"/></svg></span></td>
</tr>
<tr class="odd">
<td><span class="cb" style="position:relative;top:-3px"></span></td>
<td>1137</td>
<td>-</td>
<td>王福山</td>
<td>王福山</td>
<td></td>
<td></td>
<td>-</td>
<td><span class="av" style="background:#e39bac">王</span></td>
<td>2</td><td>2</td><td>2022-11-19 15:01:17</td><td><span class="ip">36.63.238.91</span></td><td>2022-11-19 15:01:24</td><td><span class="ip">36.63.238.91</span></td>
<td><span class="st"><span class="dot"></span>正常</span></td>
<td><span class="ab" style="background:#3498db"><svg style="position:absolute;left:6px;top:5px" width="11" height="11" viewBox="0 0 14 14" preserveAspectRatio="none"><path d="M5.6 0.5 L8.4 0.5 L8.4 8 L11.6 4.8 L13.4 6.8 L7 13.2 L0.6 6.8 L2.4 4.8 L5.6 8 Z" fill="#fff"/></svg></span><span class="ab" style="background:#18bc9c"><svg style="position:absolute;left:6px;top:5px" width="11" height="11" viewBox="0 0 14 14" preserveAspectRatio="none"><path d="M0.8 13.2 L1.4 9.6 L9.8 1.2 Q10.6 0.6 11.4 1.2 L12.8 2.6 Q13.4 3.4 12.8 4.2 L4.4 12.6 Z" fill="#fff"/><path d="M2.2 9.2 L4.8 11.8 M8.6 2.6 L11.4 5.4" stroke="#18bc9c" stroke-width=".6" opacity=".5"/></svg></span><span class="ab" style="background:#e74c3c;width:21.5px"><svg style="position:absolute;left:5.8px;top:5.2px;overflow:visible" width="10" height="10.8" viewBox="0 0 10 11"><rect x="0" y="1.6" width="10" height="1.3" fill="#fff"/><path d="M3 1.8 L3.3 0.3 L6.7 0.3 L7 1.8" fill="none" stroke="#fff" stroke-width="1"/><path d="M1 2.8 L9 2.8 L8.7 10.1 Q8.6 11 7.8 11 L2.2 11 Q1.4 11 1.3 10.1 Z" fill="#fff"/><rect x="2.9" y="4" width="1" height="5.6" fill="#e74c3c"/><rect x="6.1" y="4" width="1" height="5.6" fill="#e74c3c"/></svg></span></td>
</tr>
<tr class="">
<td><span class="cb" style="position:relative;top:-3px"></span></td>
<td>1133</td>
<td>默认组</td>
<td>86132132</td>
<td>o</td>
<td>123456789@qq.com</td>
<td></td>
<td>-</td>
<td><span class="av" style="background:#e39bb9">O</span></td>
<td>6</td><td>663</td><td>2022-11-19 13:24:58</td><td><span class="ip">1</span></td><td>2022-11-19 13:25:17</td><td><span class="ip">1</span></td>
<td><span class="st" style="color:#d2d6de"><span class="dot" style="background:#d2d6de"></span>隐藏</span></td>
<td><span class="ab" style="background:#3498db"><svg style="position:absolute;left:6px;top:5px" width="11" height="11" viewBox="0 0 14 14" preserveAspectRatio="none"><path d="M5.6 0.5 L8.4 0.5 L8.4 8 L11.6 4.8 L13.4 6.8 L7 13.2 L0.6 6.8 L2.4 4.8 L5.6 8 Z" fill="#fff"/></svg></span><span class="ab" style="background:#18bc9c"><svg style="position:absolute;left:6px;top:5px" width="11" height="11" viewBox="0 0 14 14" preserveAspectRatio="none"><path d="M0.8 13.2 L1.4 9.6 L9.8 1.2 Q10.6 0.6 11.4 1.2 L12.8 2.6 Q13.4 3.4 12.8 4.2 L4.4 12.6 Z" fill="#fff"/><path d="M2.2 9.2 L4.8 11.8 M8.6 2.6 L11.4 5.4" stroke="#18bc9c" stroke-width=".6" opacity=".5"/></svg></span><span class="ab" style="background:#e74c3c;width:21.5px"><svg style="position:absolute;left:5.8px;top:5.2px;overflow:visible" width="10" height="10.8" viewBox="0 0 10 11"><rect x="0" y="1.6" width="10" height="1.3" fill="#fff"/><path d="M3 1.8 L3.3 0.3 L6.7 0.3 L7 1.8" fill="none" stroke="#fff" stroke-width="1"/><path d="M1 2.8 L9 2.8 L8.7 10.1 Q8.6 11 7.8 11 L2.2 11 Q1.4 11 1.3 10.1 Z" fill="#fff"/><rect x="2.9" y="4" width="1" height="5.6" fill="#e74c3c"/><rect x="6.1" y="4" width="1" height="5.6" fill="#e74c3c"/></svg></span></td>
</tr>
<tr class="odd">
<td><span class="cb" style="position:relative;top:-3px"></span></td>
<td>1105</td>
<td>默认组</td>
<td>22335566</td>
<td>22335566</td>
<td>22335566@qq.com</td>
<td></td>
<td>-</td>
<td><span class="av" style="background:#9bc9e3">2</span></td>
<td>0</td><td>0</td><td>2022-11-13 22:24:40</td><td><span class="ip">178.173.225.153</span></td><td>2022-10-28 18:18:43</td><td><span class="ip">178.173.225.153</span></td>
<td><span class="st"><span class="dot"></span>正常</span></td>
<td><span class="ab" style="background:#3498db"><svg style="position:absolute;left:6px;top:5px" width="11" height="11" viewBox="0 0 14 14" preserveAspectRatio="none"><path d="M5.6 0.5 L8.4 0.5 L8.4 8 L11.6 4.8 L13.4 6.8 L7 13.2 L0.6 6.8 L2.4 4.8 L5.6 8 Z" fill="#fff"/></svg></span><span class="ab" style="background:#18bc9c"><svg style="position:absolute;left:6px;top:5px" width="11" height="11" viewBox="0 0 14 14" preserveAspectRatio="none"><path d="M0.8 13.2 L1.4 9.6 L9.8 1.2 Q10.6 0.6 11.4 1.2 L12.8 2.6 Q13.4 3.4 12.8 4.2 L4.4 12.6 Z" fill="#fff"/><path d="M2.2 9.2 L4.8 11.8 M8.6 2.6 L11.4 5.4" stroke="#18bc9c" stroke-width=".6" opacity=".5"/></svg></span><span class="ab" style="background:#e74c3c;width:21.5px"><svg style="position:absolute;left:5.8px;top:5.2px;overflow:visible" width="10" height="10.8" viewBox="0 0 10 11"><rect x="0" y="1.6" width="10" height="1.3" fill="#fff"/><path d="M3 1.8 L3.3 0.3 L6.7 0.3 L7 1.8" fill="none" stroke="#fff" stroke-width="1"/><path d="M1 2.8 L9 2.8 L8.7 10.1 Q8.6 11 7.8 11 L2.2 11 Q1.4 11 1.3 10.1 Z" fill="#fff"/><rect x="2.9" y="4" width="1" height="5.6" fill="#e74c3c"/><rect x="6.1" y="4" width="1" height="5.6" fill="#e74c3c"/></svg></span></td>
</tr>
<tr class="">
<td><span class="cb" style="position:relative;top:-3px"></span></td>
<td>1103</td>
<td>默认组</td>
<td>hh8945</td>
<td>hh8945</td>
<td>111@qq.com</td>
<td></td>
<td>-</td>
<td><span class="av" style="background:#a89be3">H</span></td>
<td>0</td><td>0</td><td>2022-11-16 17:57:09</td><td><span class="ip">103.171.177.43</span></td><td>2022-10-11 11:14:11</td><td><span class="ip">111.250.199.16</span></td>
<td><span class="st"><span class="dot"></span>正常</span></td>
<td><span class="ab" style="background:#3498db"><svg style="position:absolute;left:6px;top:5px" width="11" height="11" viewBox="0 0 14 14" preserveAspectRatio="none"><path d="M5.6 0.5 L8.4 0.5 L8.4 8 L11.6 4.8 L13.4 6.8 L7 13.2 L0.6 6.8 L2.4 4.8 L5.6 8 Z" fill="#fff"/></svg></span><span class="ab" style="background:#18bc9c"><svg style="position:absolute;left:6px;top:5px" width="11" height="11" viewBox="0 0 14 14" preserveAspectRatio="none"><path d="M0.8 13.2 L1.4 9.6 L9.8 1.2 Q10.6 0.6 11.4 1.2 L12.8 2.6 Q13.4 3.4 12.8 4.2 L4.4 12.6 Z" fill="#fff"/><path d="M2.2 9.2 L4.8 11.8 M8.6 2.6 L11.4 5.4" stroke="#18bc9c" stroke-width=".6" opacity=".5"/></svg></span><span class="ab" style="background:#e74c3c;width:21.5px"><svg style="position:absolute;left:5.8px;top:5.2px;overflow:visible" width="10" height="10.8" viewBox="0 0 10 11"><rect x="0" y="1.6" width="10" height="1.3" fill="#fff"/><path d="M3 1.8 L3.3 0.3 L6.7 0.3 L7 1.8" fill="none" stroke="#fff" stroke-width="1"/><path d="M1 2.8 L9 2.8 L8.7 10.1 Q8.6 11 7.8 11 L2.2 11 Q1.4 11 1.3 10.1 Z" fill="#fff"/><rect x="2.9" y="4" width="1" height="5.6" fill="#e74c3c"/><rect x="6.1" y="4" width="1" height="5.6" fill="#e74c3c"/></svg></span></td>
</tr>
</tbody></table>
<div class="abs" style="left:260px;top:658px;font-size:13px;line-height:18px;color:#333">顯示第 1 到第 10 條記錄，總共 10 條記錄</div>
<svg class="abs" style="left:1812px;top:860px" width="88" height="88" viewBox="0 0 88 88"><circle cx="44" cy="44.5" r="43.5" fill="#f3e3e7"/><circle cx="44" cy="44.5" r="33" fill="#f5b9bd"/><circle cx="44" cy="44.5" r="27.4" fill="#ff1212"/><circle cx="44.5" cy="44.3" r="15.7" fill="#fff"/><path d="M29.6 49 L31.5 52.5 L31.2 58.6 L40.5 58.6 L44 56 Z" fill="#fff"/><circle cx="37.3" cy="44.6" r="1.6" fill="#ff1212"/><circle cx="44.4" cy="44.6" r="1.6" fill="#ff1212"/><circle cx="51.4" cy="44.6" r="1.6" fill="#ff1212"/></svg>
</body></html>
